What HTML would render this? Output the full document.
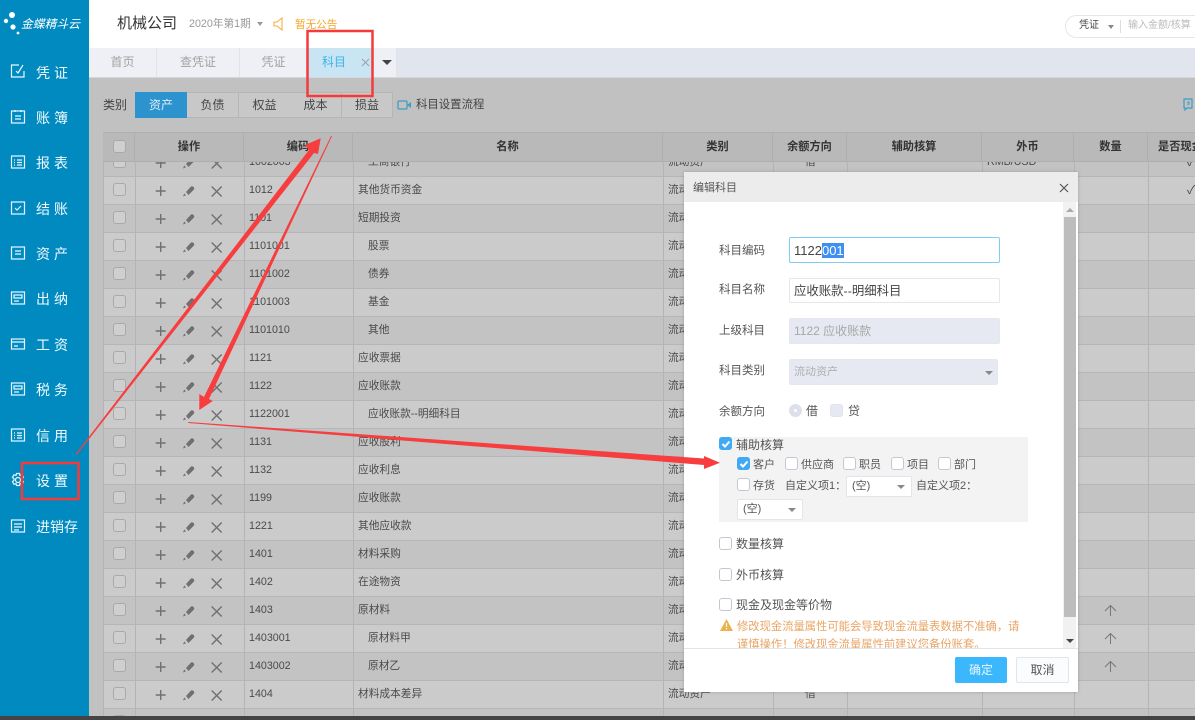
<!DOCTYPE html>
<html lang="zh"><head><meta charset="utf-8"><title>科目</title>
<style>
*{box-sizing:border-box}
html,body{margin:0;padding:0}
body{width:1195px;height:720px;overflow:hidden;position:relative;background:#c1c1c1;font-family:"Liberation Sans","Noto Sans CJK SC",sans-serif;font-size:12px;color:#444}
.a{position:absolute;white-space:nowrap}
#side{position:absolute;left:0;top:0;width:89px;height:716px;background:#008ac0;color:#fff}
.nav{position:absolute;left:36px;margin-top:1px;font-size:14px;line-height:20px;letter-spacing:4px;color:#f2fbff}
.ni{position:absolute;left:10px;width:16px;height:16px;fill:none;stroke:#e8f7ff;stroke-width:1.2}
#top{position:absolute;left:89px;top:0;width:1106px;height:48px;background:#fff}
#tabs{position:absolute;left:89px;top:48px;width:1106px;height:30px;background:#e1e5ed;border-bottom:1px solid #d5d7dc}
#tabs .t{position:absolute;top:0;height:29px;line-height:29px;text-align:center;background:#eef0f5;color:#a2a2a2;font-size:12px;border-right:1px solid #e1e3e9}
.cat{position:absolute;top:92px;height:26px;line-height:24px;text-align:center;background:#c8c8c8;border:1px solid #b6b6b6;border-left:0;color:#444;width:52px}
#th,#tb{position:absolute;left:103px;width:1092px}
#th{top:132px;height:30px;background:#b9b9b9;border-top:1px solid #b0b0b4;border-bottom:1px solid #adadb2}
#th div{position:absolute;top:0;height:28px;line-height:29px;text-align:center;color:#333;font-weight:bold;font-size:11.2px;border-right:1px solid #adadb2}
#tb{top:162px;height:554px;overflow:hidden}
#rows{position:absolute;left:0;top:1px;width:1092px;height:580px}
.r{position:absolute;left:0;width:1092px;height:28px;border-bottom:1px solid #b6b6ba}
.l{background:#cbcbcb}.d{background:#c3c3c3}
.v{position:absolute;top:0;width:1px;height:554px;background:#b4b4b8}
.r span{position:absolute;line-height:27px;white-space:nowrap;color:#4a4a4a;font-size:10.7px}
.r .up{position:absolute;left:1001px;top:7px;width:13px;height:13px;fill:none;stroke:#777;stroke-width:1}
.cb{position:absolute;left:10px;top:6px;width:13px;height:13px;border:1px solid #a8a8ae;border-radius:3px;background:#cfcfcf}
.ic{position:absolute;top:7px;left:52px;width:68px;height:14px}
#dlg{position:absolute;left:684px;top:172px;width:394px;height:520px;background:#fff;box-shadow:0 0 3px rgba(120,120,120,.5);overflow:hidden}
#dlg .a{color:#555}
.lb{font-size:11.5px}
.in{position:absolute;height:26px;border:1px solid #e5e7ee;border-radius:2px;line-height:24px;padding-left:4px;font-size:12px}
.ck{position:absolute;width:13px;height:13px;border:1px solid #c3c7d3;border-radius:3px;background:#fff}
.ck.on{background:#3fa9f5;border-color:#3fa9f5}
.ck.on svg{position:absolute;left:1px;top:1px;width:10px;height:10px;fill:none;stroke:#fff;stroke-width:2}
.sel{position:absolute;border:1px solid #e3e5ec;background:#fff;border-radius:2px;height:21px;line-height:19px;padding-left:5px;color:#555;font-size:11px}
.sel i,.tri{position:absolute;width:0;height:0;border-left:4px solid transparent;border-right:4px solid transparent;border-top:4px solid #888}
.sel i{right:6px;top:8px}
</style></head><body>
<svg width="0" height="0" style="position:absolute"><defs>
<symbol id="ops" viewBox="0 0 68 14"><path d="M5.700 2v10M.7 7h10" stroke="#707070" stroke-width="1.400" fill="none"/><path d="M31 8l5-5.500q1-.5 2 0l1 1q.5 1 0 2l-5.500 5.500z" fill="#707070"/><path d="M28 12.500l1.200-3 1.800 1.800z" fill="#707070"/><path d="M56.700 2.500l10 10M66.700 2.500l-10 10" stroke="#707070" stroke-width="1.400" fill="none"/></symbol>
<symbol id="upa" viewBox="0 0 13 13"><path d="M6.500 12V1.500M1 7l5.500-5.500L12 7"/></symbol>
</defs></svg>

<div id="side">
<svg class="a" style="left:3px;top:11px" width="20" height="26" viewBox="0 0 20 26"><circle cx="9" cy="4" r="3" fill="#fff"/><circle cx="3" cy="10" r="2.2" fill="#fff"/><circle cx="10" cy="16" r="2.6" fill="#fff"/><circle cx="15" cy="22" r="1.4" fill="#fff"/></svg>
<div class="a" style="left:21px;top:15px;font-size:11.800px;line-height:18px;color:#fff;font-style:italic">金蝶精斗云</div>
<svg class="ni" style="top:63px" viewBox="0 0 16 16"><path d="M14 8v6H1.500V2H9M6 8l2 2 5-8"/></svg><div class="nav" style="top:62px">凭证</div>
<svg class="ni" style="top:109px" viewBox="0 0 16 16"><rect x="1.500" y="2" width="13" height="12"/><path d="M5 1v2M11 1v2M5 7h6M5 10h6"/></svg><div class="nav" style="top:107px">账簿</div>
<svg class="ni" style="top:154px" viewBox="0 0 16 16"><rect x="1.500" y="2" width="13" height="12"/><path d="M4 6h1M7 6h5M4 8.500h1M7 8.500h5M4 11h1M7 11h5"/></svg><div class="nav" style="top:152px">报表</div>
<svg class="ni" style="top:200px" viewBox="0 0 16 16"><rect x="1.500" y="2" width="13" height="12"/><path d="M5 8l2 2 4-4"/></svg><div class="nav" style="top:198px">结账</div>
<svg class="ni" style="top:245px" viewBox="0 0 16 16"><rect x="1.500" y="2" width="13" height="12"/><path d="M5 6h6M5 9h6"/></svg><div class="nav" style="top:243px">资产</div>
<svg class="ni" style="top:290px" viewBox="0 0 16 16"><rect x="1.500" y="2" width="13" height="12"/><path d="M4 5h8v3H4zM4 11h5"/></svg><div class="nav" style="top:288px">出纳</div>
<svg class="ni" style="top:336px" viewBox="0 0 16 16"><rect x="1.500" y="3" width="13" height="10"/><path d="M1.500 6h13M4 10h4"/></svg><div class="nav" style="top:334px">工资</div>
<svg class="ni" style="top:381px" viewBox="0 0 16 16"><rect x="1.500" y="2" width="13" height="12"/><path d="M4 5h8v3H4zM4 11h5"/></svg><div class="nav" style="top:379px">税务</div>
<svg class="ni" style="top:427px" viewBox="0 0 16 16"><rect x="1.500" y="2" width="13" height="12"/><path d="M4 6h1M7 6h5M4 8.500h1M7 8.500h5M4 11h1M7 11h5"/></svg><div class="nav" style="top:425px">信用</div>
<svg class="ni" style="top:472px" viewBox="0 0 16 16"><circle cx="8" cy="8" r="2.500"/><path d="M6.500 1.500h3l.5 2 2-.8 1.500 2.600-1.500 1.500v1.400l1.500 1.500-1.500 2.600-2-.8-.5 2h-3l-.5-2-2 .8-1.500-2.600 1.500-1.500V6.800L2.500 5.300 4 2.700l2 .8z"/></svg><div class="nav" style="top:470px">设置</div>
<svg class="ni" style="top:518px" viewBox="0 0 16 16"><rect x="1.500" y="2" width="13" height="12"/><path d="M4 6h8M4 9h8M4 12h5"/></svg><div class="nav" style="top:516px;letter-spacing:0">进销存</div>
</div>

<div id="top"></div>
<div class="a" style="left:117px;top:13px;font-size:15px;line-height:22px;color:#333">机械公司</div>
<div class="a" style="left:189px;top:15px;font-size:10.700px;line-height:18px;color:#999">2020年第1期</div>
<div class="tri" style="left:257px;top:22px;border-top-color:#999;border-left-width:3px;border-right-width:3px"></div>
<svg class="a" style="left:273px;top:17px" width="11" height="14" viewBox="0 0 11 14"><path d="M1 5h3l5-4v12L4 9H1z" fill="none" stroke="#f5b041" stroke-width="1.100"/></svg>
<div class="a" style="left:295px;top:16px;font-size:10.600px;line-height:18px;color:#f5a623">暂无公告</div>
<div class="a" style="left:1065px;top:15px;width:140px;height:23px;border:1px solid #e6e6e6;border-radius:12px;background:#fff"></div>
<div class="a" style="left:1079px;top:17px;font-size:10px;line-height:18px;color:#444">凭证</div>
<div class="tri" style="left:1108px;top:25px;border-left-width:3px;border-right-width:3px;border-top-color:#888"></div>
<div class="a" style="left:1120px;top:20px;width:1px;height:13px;background:#ddd"></div>
<div class="a" style="left:1128px;top:17px;font-size:10px;line-height:18px;color:#bbb">输入金额/核算</div>

<div id="tabs">
<div class="t" style="left:0;width:68px">首页</div>
<div class="t" style="left:68px;width:83px">查凭证</div>
<div class="t" style="left:151px;width:68px">凭证</div>
<div class="t" style="left:219px;width:65px;background:#c9e4f2;color:#3cb4e8;text-align:left;padding-left:14px">科目<svg style="position:absolute;left:53px;top:10px" width="9" height="9" viewBox="0 0 9 9"><path d="M1 1l7 7M8 1L1 8" stroke="#9aa5ad" stroke-width="1.100"/></svg></div>
<div class="t" style="left:284px;width:24px"></div>
<div class="tri" style="left:293px;top:12px;border-left-width:5px;border-right-width:5px;border-top:5px solid #444"></div>
</div>

<div class="a" style="left:103px;top:96px;line-height:18px">类别</div>
<div class="cat" style="left:135px;background:#2d93cf;color:#d8eefa;border:1px solid #2d93cf">资产</div>
<div class="cat" style="left:187px">负债</div>
<div class="cat" style="left:239px">权益</div>
<div class="cat" style="left:290px">成本</div>
<div class="cat" style="left:342px;width:51px">损益</div>
<svg class="a" style="left:397px;top:99px" width="15" height="12" viewBox="0 0 15 12"><rect x="1" y="2" width="9" height="8" rx="1" fill="none" stroke="#3f9dc8" stroke-width="1.300"/><path d="M10 6l4-3v6z" fill="#3f9dc8"/></svg>
<div class="a" style="left:416px;top:96px;line-height:18px;font-size:11.400px;color:#444">科目设置流程</div>
<svg class="a" style="left:1183px;top:98px" width="10" height="13" viewBox="0 0 10 13"><path d="M1 1h8v9H4l-2 2v-2H1z" fill="none" stroke="#3f9dc8" stroke-width="1.200"/><path d="M4 4h2v2H5v1" fill="none" stroke="#3f9dc8"/></svg>

<div id="th">
<div style="left:0;width:32px"><span style="position:absolute;left:10px;top:7px;width:13px;height:13px;border:1px solid #a8a8ae;border-radius:3px;background:#cfcfcf"></span></div>
<div style="left:32px;width:109px">操作</div>
<div style="left:141px;width:109px">编码</div>
<div style="left:250px;width:310px">名称</div>
<div style="left:560px;width:110px">类别</div>
<div style="left:670px;width:74px">余额方向</div>
<div style="left:744px;width:135px">辅助核算</div>
<div style="left:879px;width:92px">外币</div>
<div style="left:971px;width:74px">数量</div>
<div style="left:1045px;width:60px;border:0;text-align:left;padding-left:10px">是否现金</div>
</div>

<div id="tb"><div id="rows">
<div class="r d" style="top:-14px"><i class="cb"></i><svg class="ic"><use href="#ops"/></svg><span style="left:146px">1002003</span><span style="left:265px">工商银行</span><span style="left:565px">流动资产</span><span style="left:702px">借</span><span style="left:884px">RMB/USD</span><span style="left:1084px;font-size:12px">✓</span></div>
<div class="r l" style="top:14px"><i class="cb"></i><svg class="ic"><use href="#ops"/></svg><span style="left:146px">1012</span><span style="left:255px">其他货币资金</span><span style="left:565px">流动资产</span><span style="left:1084px;font-size:12px">✓</span></div>
<div class="r d" style="top:42px"><i class="cb"></i><svg class="ic"><use href="#ops"/></svg><span style="left:146px">1101</span><span style="left:255px">短期投资</span><span style="left:565px">流动资产</span></div>
<div class="r l" style="top:70px"><i class="cb"></i><svg class="ic"><use href="#ops"/></svg><span style="left:146px">1101001</span><span style="left:265px">股票</span><span style="left:565px">流动资产</span></div>
<div class="r d" style="top:98px"><i class="cb"></i><svg class="ic"><use href="#ops"/></svg><span style="left:146px">1101002</span><span style="left:265px">债券</span><span style="left:565px">流动资产</span></div>
<div class="r l" style="top:126px"><i class="cb"></i><svg class="ic"><use href="#ops"/></svg><span style="left:146px">1101003</span><span style="left:265px">基金</span><span style="left:565px">流动资产</span></div>
<div class="r d" style="top:154px"><i class="cb"></i><svg class="ic"><use href="#ops"/></svg><span style="left:146px">1101010</span><span style="left:265px">其他</span><span style="left:565px">流动资产</span></div>
<div class="r l" style="top:182px"><i class="cb"></i><svg class="ic"><use href="#ops"/></svg><span style="left:146px">1121</span><span style="left:255px">应收票据</span><span style="left:565px">流动资产</span></div>
<div class="r d" style="top:210px"><i class="cb"></i><svg class="ic"><use href="#ops"/></svg><span style="left:146px">1122</span><span style="left:255px">应收账款</span><span style="left:565px">流动资产</span></div>
<div class="r l" style="top:238px"><i class="cb"></i><svg class="ic"><use href="#ops"/></svg><span style="left:146px">1122001</span><span style="left:265px">应收账款--明细科目</span><span style="left:565px">流动资产</span></div>
<div class="r d" style="top:266px"><i class="cb"></i><svg class="ic"><use href="#ops"/></svg><span style="left:146px">1131</span><span style="left:255px">应收股利</span><span style="left:565px">流动资产</span></div>
<div class="r l" style="top:294px"><i class="cb"></i><svg class="ic"><use href="#ops"/></svg><span style="left:146px">1132</span><span style="left:255px">应收利息</span><span style="left:565px">流动资产</span></div>
<div class="r d" style="top:322px"><i class="cb"></i><svg class="ic"><use href="#ops"/></svg><span style="left:146px">1199</span><span style="left:255px">应收账款</span><span style="left:565px">流动资产</span></div>
<div class="r l" style="top:350px"><i class="cb"></i><svg class="ic"><use href="#ops"/></svg><span style="left:146px">1221</span><span style="left:255px">其他应收款</span><span style="left:565px">流动资产</span></div>
<div class="r d" style="top:378px"><i class="cb"></i><svg class="ic"><use href="#ops"/></svg><span style="left:146px">1401</span><span style="left:255px">材料采购</span><span style="left:565px">流动资产</span></div>
<div class="r l" style="top:406px"><i class="cb"></i><svg class="ic"><use href="#ops"/></svg><span style="left:146px">1402</span><span style="left:255px">在途物资</span><span style="left:565px">流动资产</span></div>
<div class="r d" style="top:434px"><i class="cb"></i><svg class="ic"><use href="#ops"/></svg><span style="left:146px">1403</span><span style="left:255px">原材料</span><span style="left:565px">流动资产</span><svg class="up"><use href="#upa"/></svg></div>
<div class="r l" style="top:462px"><i class="cb"></i><svg class="ic"><use href="#ops"/></svg><span style="left:146px">1403001</span><span style="left:265px">原材料甲</span><span style="left:565px">流动资产</span><svg class="up"><use href="#upa"/></svg></div>
<div class="r d" style="top:490px"><i class="cb"></i><svg class="ic"><use href="#ops"/></svg><span style="left:146px">1403002</span><span style="left:265px">原材乙</span><span style="left:565px">流动资产</span><svg class="up"><use href="#upa"/></svg></div>
<div class="r l" style="top:518px"><i class="cb"></i><svg class="ic"><use href="#ops"/></svg><span style="left:146px">1404</span><span style="left:255px">材料成本差异</span><span style="left:565px">流动资产</span><span style="left:702px">借</span></div>
<div class="r d" style="top:546px"><i class="cb"></i></div>
</div>
<i class="v" style="left:0"></i><i class="v" style="left:32px"></i><i class="v" style="left:141px"></i><i class="v" style="left:250px"></i><i class="v" style="left:560px"></i><i class="v" style="left:670px"></i><i class="v" style="left:744px"></i><i class="v" style="left:879px"></i><i class="v" style="left:971px"></i><i class="v" style="left:1045px"></i>
</div>
<div class="a" style="left:0;top:716px;width:1195px;height:4px;background:#444"></div>

<div id="dlg">
<div class="a" style="left:0;top:0;width:394px;height:30px;background:#ececec"></div>
<div class="a" style="left:9px;top:8px;font-size:11px;line-height:16px;color:#555">编辑科目</div>
<svg class="a" style="left:375px;top:11px" width="10" height="10" viewBox="0 0 10 10"><path d="M1 1l8 8M9 1L1 9" stroke="#555" stroke-width="1.200"/></svg>
<div class="a" style="left:379px;top:30px;width:13px;height:446px;background:#f1f1f1"></div>
<div class="a" style="left:380px;top:45px;width:12px;height:400px;background:#bdbdbd"></div>
<div class="tri" style="left:382px;top:36px;border-top:0;border-bottom:4px solid #aaa"></div>
<div class="tri" style="left:382px;top:467px;border-top-color:#444"></div>

<div class="a lb" style="left:35px;top:71px;line-height:16px">科目编码</div>
<div class="in" style="left:105px;top:65px;width:211px;border-color:#7fcdf5;font-size:13px;padding-left:4px;line-height:25px;color:#444">1122<span style="background:#3d8ff2;color:#fff">001</span></div>
<div class="a lb" style="left:35px;top:110px;line-height:16px">科目名称</div>
<div class="in" style="left:105px;top:106px;width:211px;height:25px;color:#444;font-size:12.400px">应收账款--明细科目</div>
<div class="a lb" style="left:35px;top:151px;line-height:16px">上级科目</div>
<div class="in" style="left:105px;top:146px;width:211px;background:#e6e9f2;color:#a8a8a8;font-size:12px">1122 应收账款</div>
<div class="a lb" style="left:35px;top:191px;line-height:16px">科目类别</div>
<div class="in" style="left:105px;top:187px;width:209px;background:#e6e9f2;color:#b0b0b0;font-size:11px">流动资产<i class="tri" style="right:4px;top:11px;border-top-color:#888"></i></div>
<div class="a lb" style="left:35px;top:232px;line-height:16px">余额方向</div>
<div class="ck" style="left:105px;top:232px;border-radius:50%;background:#dde0ea;border-color:#dde0ea"><i style="position:absolute;left:4px;top:4px;width:3px;height:3px;border-radius:50%;background:#fff"></i></div>
<div class="a" style="left:122px;top:231px;line-height:16px">借</div>
<div class="ck" style="left:146px;top:232px;background:#e6e9f2;border-color:#e0e3ec"></div>
<div class="a" style="left:164px;top:231px;line-height:16px">贷</div>

<div class="a" style="left:35px;top:265px;width:309px;height:85px;background:#f3f3f3"></div>
<div class="ck on" style="left:35px;top:265px"><svg viewBox="0 0 10 10"><path d="M1.500 5l2.500 2.500L8.500 2.500"/></svg></div>
<div class="a" style="left:52px;top:265px;line-height:16px">辅助核算</div>
<div class="ck on" style="left:53px;top:285px"><svg viewBox="0 0 10 10"><path d="M1.500 5l2.500 2.500L8.500 2.500"/></svg></div>
<div class="a" style="left:69px;top:285px;font-size:11px;line-height:16px">客户</div>
<div class="ck" style="left:101px;top:285px"></div><div class="a" style="left:117px;top:285px;font-size:11px;line-height:16px">供应商</div>
<div class="ck" style="left:159px;top:285px"></div><div class="a" style="left:175px;top:285px;font-size:11px;line-height:16px">职员</div>
<div class="ck" style="left:207px;top:285px"></div><div class="a" style="left:223px;top:285px;font-size:11px;line-height:16px">项目</div>
<div class="ck" style="left:254px;top:285px"></div><div class="a" style="left:270px;top:285px;font-size:11px;line-height:16px">部门</div>
<div class="ck" style="left:53px;top:306px"></div><div class="a" style="left:69px;top:306px;font-size:11px;line-height:16px">存货</div>
<div class="a" style="left:101px;top:306px;font-size:11px;line-height:16px">自定义项1：</div>
<div class="sel" style="left:162px;top:304px;width:66px">(空)<i></i></div>
<div class="a" style="left:232px;top:306px;font-size:11px;line-height:16px">自定义项2：</div>
<div class="sel" style="left:53px;top:327px;width:66px">(空)<i></i></div>

<div class="ck" style="left:35px;top:365px"></div><div class="a" style="left:52px;top:364px;line-height:16px">数量核算</div>
<div class="ck" style="left:35px;top:396px"></div><div class="a" style="left:52px;top:395px;line-height:16px">外币核算</div>
<div class="ck" style="left:35px;top:426px"></div><div class="a" style="left:52px;top:425px;line-height:16px">现金及现金等价物</div>
<svg class="a" style="left:36px;top:447px" width="13" height="12" viewBox="0 0 13 12"><path d="M6.500 0L13 12H0z" fill="#eab14d"/><path d="M6.500 4v4M6.500 9v1.500" stroke="#fff" stroke-width="1.200"/></svg>
<div class="a" style="left:53px;top:447px;font-size:11.300px;line-height:16px;color:#e9a464">修改现金流量属性可能会导致现金流量表数据不准确，请</div>
<div class="a" style="left:53px;top:465px;width:326px;height:11px;overflow:hidden;font-size:11.300px;line-height:16px;color:#e9a464">谨慎操作！修改现金流量属性前建议您备份账套。</div>
<div class="a" style="left:0;top:476px;width:394px;height:44px;background:#fff;border-top:1px solid #dce6ee"></div>
<div class="a" style="left:271px;top:485px;width:52px;height:26px;background:#3ab7fd;border-radius:2px;text-align:center;line-height:26px;color:#eaf7ff">确定</div>
<div class="a" style="left:332px;top:485px;width:53px;height:26px;background:#fafcfe;border:1px solid #e2e6ec;border-radius:2px;text-align:center;line-height:24px;color:#555">取消</div>
</div>

<svg class="a" style="left:0;top:0" width="1195" height="720" viewBox="0 0 1195 720">
<rect x="307.500" y="31" width="65" height="65" fill="none" stroke="#f43a3a" stroke-width="2.500"/>
<rect x="22" y="463" width="56.500" height="36" fill="none" stroke="#f43a3a" stroke-width="2.500"/>
<polygon points="75.700,454 309,150 305,145 320.700,138.300 318,154 314,153 76.500,455" fill="#f73d3d"/>
<polygon points="332,136 209,399 212.700,401 199.300,410 199.300,394 204,397 331,136" fill="#f73d3d"/>
<polygon points="188.300,422 704,458.500 704,456 720,462.700 704,469 704,465 188.300,423" fill="#f73d3d"/>
</svg>
</body></html>
